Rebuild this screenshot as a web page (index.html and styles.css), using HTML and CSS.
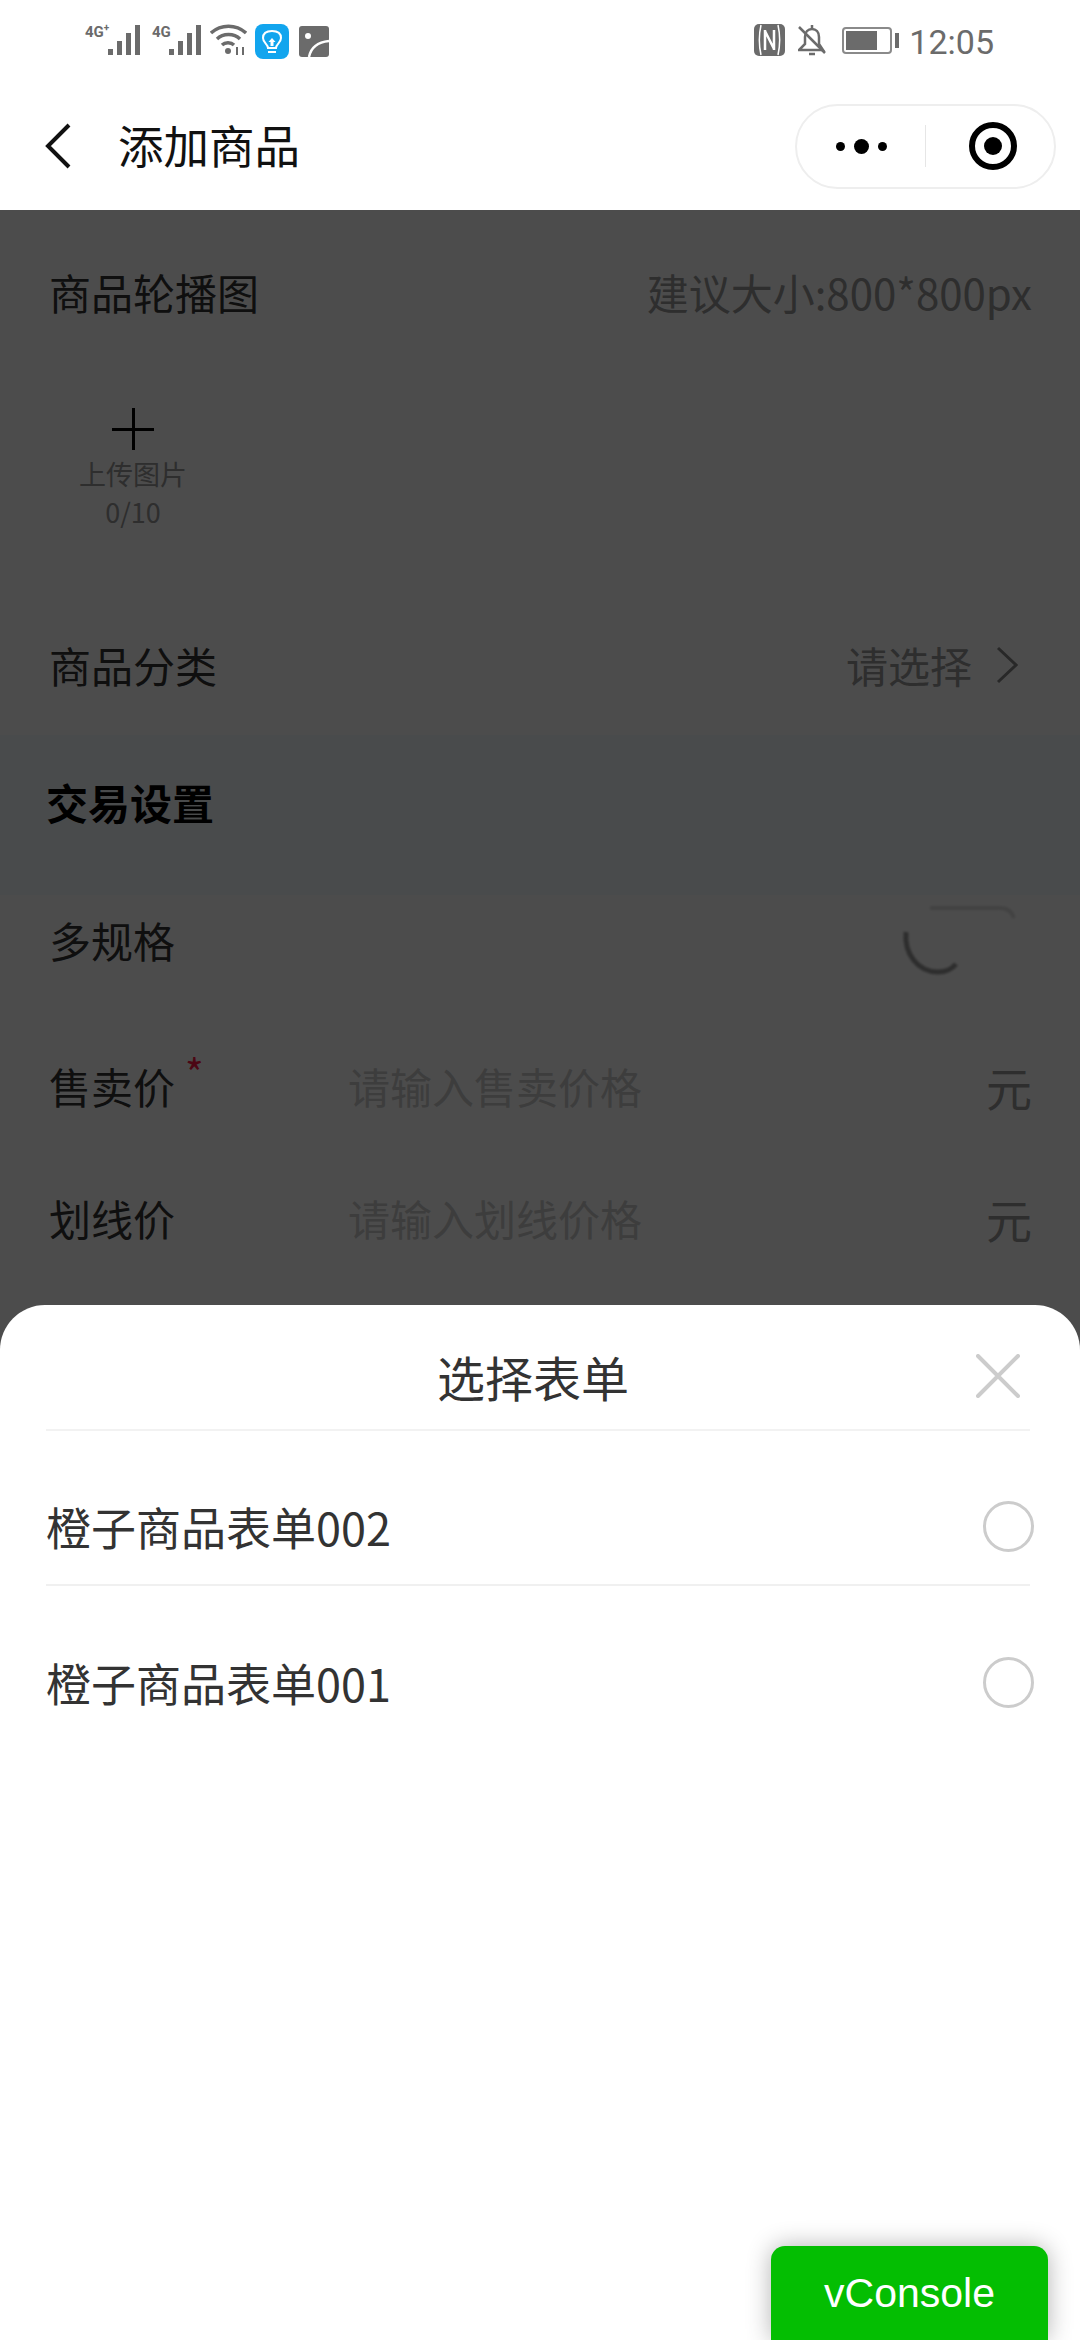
FILE: index.html
```html
<!DOCTYPE html>
<html lang="zh-CN">
<head>
    <meta charset="UTF-8">
    <meta name="viewport" content="width=device-width, initial-scale=1.0">
    <title>添加商品</title>
    <link rel="stylesheet" href="styles.css">
</head>
<body>
    <div class="phone">
        <div class="status-bar">
            <div class="status-left">
                <div class="signal">
                    <span class="net-label">4G<sup>+</sup></span>
                    <svg class="bars" width="32" height="32" viewBox="0 0 32 32"><rect x="0" y="25" width="5" height="6" fill="#6b6b6b"/><rect x="9" y="17" width="5" height="14" fill="#6b6b6b"/><rect x="18" y="9" width="5" height="22" fill="#6b6b6b"/><rect x="27" y="1" width="5" height="30" fill="#6b6b6b"/></svg>
                </div>
                <div class="signal signal-two">
                    <span class="net-label net-label-short">4G</span>
                    <svg class="bars" width="32" height="32" viewBox="0 0 32 32"><rect x="0" y="25" width="5" height="6" fill="#6b6b6b"/><rect x="9" y="17" width="5" height="14" fill="#6b6b6b"/><rect x="18" y="9" width="5" height="22" fill="#6b6b6b"/><rect x="27" y="1" width="5" height="30" fill="#6b6b6b"/></svg>
                </div>
                <svg class="wifi" width="37" height="32" viewBox="0 0 37 32" fill="none" stroke="#6b6b6b" stroke-width="3.4">
                    <path d="M1 9C11 0 26 0 36 9"/>
                    <path d="M7 15C13 9 24 9 30 15"/>
                    <path d="M12 21C15 18 21 18 24 21"/>
                    <circle cx="18" cy="27" r="3" fill="#6b6b6b" stroke="none"/>
                    <path d="M27 31V23M33 31V23" stroke-width="2"/>
                </svg>
                <svg class="app-icon" width="34" height="35" viewBox="0 0 34 35">
                    <rect width="34" height="35" rx="8" fill="#12a5ee"/>
                    <path d="M13 24C13 20 8 19 8 14C8 9 12 7 17 7C22 7 26 9 26 14C26 19 21 20 21 24Z" fill="none" stroke="#fff" stroke-width="2"/>
                    <path d="M17 14L13.500 18H15.500V22H18.500V18H20.500Z" fill="#fff"/>
                    <path d="M13 28H21" stroke="#fff" stroke-width="2"/>
                </svg>
                <svg class="pic-icon" width="30" height="31" viewBox="0 0 30 31">
                    <rect width="30" height="31" rx="3" fill="#6b6b6b"/>
                    <circle cx="9" cy="10" r="3" fill="#fff"/>
                    <path d="M10 31C12 21 20 16 30 15" fill="none" stroke="#fff" stroke-width="2.500"/>
                </svg>
            </div>
            <div class="status-right">
                <svg class="nfc" width="31" height="32" viewBox="0 0 31 32">
                    <rect width="31" height="32" rx="5" fill="#6b6b6b"/>
                    <path d="M7 1C5 10 5 22 7 31M24 1C26 10 26 22 24 31" fill="none" stroke="#fff" stroke-width="1.500"/>
                    <path d="M11 6V26M20 6V26M11 7L20 25" fill="none" stroke="#fff" stroke-width="2.500"/>
                </svg>
                <svg class="bell" width="28" height="32" viewBox="0 0 28 32" fill="none" stroke="#6b6b6b" stroke-width="2.500">
                    <path d="M1 26H25L21 20V13C21 8 18 5 14 5C10 5 7 8 7 13V20Z"/>
                    <path d="M14 1V5M11 30H17M1 3L27 29"/>
                </svg>
                <div class="battery">
                    <div class="battery-body"><div class="battery-fill"></div></div>
                    <div class="battery-nub"></div>
                </div>
                <span class="time">12:05</span>
            </div>
        </div>

        <div class="nav-bar">
            <svg class="back" width="26" height="46" viewBox="0 0 26 46" fill="none" stroke="#111" stroke-width="4">
                <path d="M24 2L3 23L24 44"/>
            </svg>
            <h1 class="nav-title">添加商品</h1>
            <div class="capsule">
                <div class="capsule-more">
                    <span class="dot"></span>
                    <span class="dot dot-big"></span>
                    <span class="dot"></span>
                </div>
                <div class="capsule-line"></div>
                <div class="capsule-target"><div class="target-inner"></div></div>
            </div>
        </div>

        <div class="form">
            <div class="row row-head">
                <span class="label">商品轮播图</span>
                <span class="hint">建议大小:800*800px</span>
            </div>
            <div class="upload">
                <div class="plus"></div>
                <div class="upload-text">上传图片</div>
                <div class="upload-text">0/10</div>
            </div>
            <div class="row row-category">
                <span class="label">商品分类</span>
                <span class="select">
                    <span class="hint">请选择</span>
                    <svg width="22" height="38" viewBox="0 0 22 38" fill="none" stroke="#888" stroke-width="3"><path d="M2 2L20 19L2 36"/></svg>
                </span>
            </div>
            <div class="section-title"><h3>交易设置</h3></div>
            <div class="row row-spec">
                <span class="label">多规格</span>
                <svg class="switch" width="120" height="76" viewBox="0 0 120 76" fill="none">
                    <path d="M6 30C4 52 18 70 38 70C46 70 52 67 56 62" stroke="#999" stroke-width="5"/>
                    <path d="M30 6H100C108 6 112 10 114 16" stroke="#ddd" stroke-width="4"/>
                </svg>
            </div>
            <div class="row row-input">
                <span class="label label-field">售卖价<sup class="star">*</sup></span>
                <span class="placeholder">请输入售卖价格</span>
                <span class="unit">元</span>
            </div>
            <div class="row row-input">
                <span class="label label-field">划线价</span>
                <span class="placeholder">请输入划线价格</span>
                <span class="unit">元</span>
            </div>
        </div>

        <div class="mask"></div>

        <div class="sheet">
            <div class="sheet-head">
                <span></span>
                <span class="sheet-title">选择表单</span>
                <svg class="close" width="44" height="44" viewBox="0 0 44 44" stroke="#ccc" stroke-width="4" stroke-linecap="round">
                    <path d="M2 2L42 42M42 2L2 42"/>
                </svg>
            </div>
            <div class="option">
                <span>橙子商品表单002</span>
                <span class="radio"></span>
            </div>
            <div class="option">
                <span>橙子商品表单001</span>
                <span class="radio"></span>
            </div>
        </div>

        <div class="vconsole">vConsole</div>
    </div>
</body>
</html>
```

FILE: styles.css
```css
* {
    box-sizing: border-box;
}

html, body {
    margin: 0;
    padding: 0;
}

body {
    font-family: "Noto Sans CJK SC", "Noto Sans", sans-serif;
    color: #333;
    background: #fff;
}

.phone {
    position: relative;
    width: 1080px;
    height: 2340px;
    overflow: hidden;
    background: #fff;
}

/* status bar */
.status-bar {
    height: 72px;
    padding: 24px 86px 0 85px;
    display: flex;
    justify-content: space-between;
    align-items: flex-start;
}

.status-left, .status-right {
    display: flex;
    align-items: flex-start;
}

.signal {
    display: flex;
    align-items: flex-start;
    height: 32px;
}

.signal-two {
    margin-left: 12px;
}

.net-label {
    font-family: "Roboto", sans-serif;
    font-size: 15px;
    line-height: 16px;
    font-weight: 700;
    color: #6b6b6b;
    width: 23px;
    white-space: nowrap;
}

.net-label-short {
    width: 17px;
}

.net-label sup {
    font-size: 10px;
    line-height: 0;
}

.wifi {
    margin-left: 9px;
}

.app-icon {
    margin-left: 8px;
}

.pic-icon {
    margin: 2px 0 0 10px;
}

.bell {
    margin-left: 13px;
}

.battery {
    display: flex;
    align-items: center;
    margin: 3px 0 0 16px;
}

.battery-body {
    width: 50px;
    height: 27px;
    border: 2px solid #8a8a8a;
    border-radius: 4px;
    padding: 2px;
}

.battery-fill {
    width: 31px;
    height: 100%;
    background: #6b6b6b;
}

.battery-nub {
    width: 4px;
    height: 15px;
    margin-left: 3px;
    background: #6b6b6b;
}

.time {
    font-family: "Roboto", sans-serif;
    font-size: 34px;
    line-height: 36px;
    color: #6b6b6b;
    margin-left: 10px;
}

/* nav */
.nav-bar {
    height: 138px;
    padding: 10px 24px 0 45px;
    display: flex;
    align-items: center;
}

.nav-title {
    margin: 0 0 4px 47px;
    font-size: 45.500px;
    font-weight: 400;
    line-height: 60px;
    color: #111;
}

.capsule {
    margin-left: auto;
    width: 261px;
    height: 85px;
    border: 2px solid #eee;
    border-radius: 43px;
    display: flex;
    align-items: center;
}

.capsule-more {
    width: 128px;
    display: flex;
    justify-content: center;
    align-items: center;
    gap: 9px;
}

.dot {
    width: 9px;
    height: 9px;
    border-radius: 50%;
    background: #000;
}

.dot-big {
    width: 15px;
    height: 15px;
}

.capsule-line {
    width: 1px;
    height: 42px;
    background: #e6e6e6;
}

.capsule-target {
    width: 48px;
    height: 48px;
    margin-left: 43px;
    border: 6px solid #000;
    border-radius: 50%;
    display: flex;
    justify-content: center;
    align-items: center;
}

.target-inner {
    width: 18px;
    height: 18px;
    border-radius: 50%;
    background: #000;
}

/* form under the mask */
.form {
    background: #fff;
}

.row {
    display: flex;
    align-items: center;
    justify-content: space-between;
    padding: 0 48px 0 49px;
}

.row-head {
    height: 170px;
    padding-bottom: 6px;
}

.row-category {
    height: 140px;
    padding-right: 62px;
}

.row-spec {
    height: 127px;
    padding-bottom: 37px;
    padding-right: 60px;
}

.row-input {
    height: 132px;
    padding-bottom: 5px;
}

.label {
    font-size: 42px;
    line-height: 56px;
    color: #333;
}

.label-field {
    width: 299px;
    flex-shrink: 0;
}

.star {
    color: #ff1744;
    font-size: 40px;
    line-height: 0;
    margin-left: 10px;
}

.hint {
    font-size: 42px;
    line-height: 56px;
    color: #999;
}

.select {
    display: flex;
    align-items: center;
    gap: 24px;
}

.switch {
    filter: blur(1px);
}

.upload {
    width: 170px;
    height: 215px;
    margin-left: 48px;
    padding-top: 28px;
    text-align: center;
}

.plus {
    width: 42px;
    height: 42px;
    margin: 0 auto 5px;
    background:
        linear-gradient(#000, #000) center / 100% 3px no-repeat,
        linear-gradient(#000, #000) center / 3px 100% no-repeat;
}

.upload-text {
    font-size: 27px;
    line-height: 38px;
    color: #999;
}

.section-title {
    height: 160px;
    padding: 0 0 26px 46px;
    display: flex;
    align-items: center;
    background: #f6faff;
}

.section-title h3 {
    margin: 0;
    font-size: 42px;
    font-weight: 700;
    line-height: 56px;
    color: #000;
}

.placeholder {
    flex: 1;
    font-size: 42px;
    line-height: 56px;
    color: #ccc;
}

.unit {
    font-size: 46px;
    line-height: 56px;
    color: #999;
}

/* overlay */
.mask {
    position: absolute;
    left: 0;
    right: 0;
    top: 210px;
    bottom: 0;
    background: rgba(0, 0, 0, 0.7);
}

.sheet {
    position: absolute;
    left: 0;
    right: 0;
    top: 1305px;
    bottom: 0;
    background: #fff;
    border-radius: 45px 45px 0 0;
}

.sheet-head {
    height: 126px;
    margin: 0 50px 0 46px;
    padding: 18px 10px 0 0;
    display: grid;
    grid-template-columns: 1fr auto 1fr;
    align-items: center;
    border-bottom: 2px solid #f2f2f2;
}

.sheet-title {
    font-size: 48px;
    line-height: 62px;
    color: #333;
}

.close {
    justify-self: end;
}

.option {
    height: 155px;
    margin: 0 50px 0 46px;
    padding-top: 38px;
    display: flex;
    align-items: center;
    justify-content: space-between;
    font-size: 45px;
    color: #333;
    border-bottom: 2px solid #f0f0f0;
}

.option:last-child {
    border-bottom: none;
}

.radio {
    width: 51px;
    height: 51px;
    margin-right: -4px;
    border: 3px solid #ccc;
    border-radius: 50%;
}

.vconsole {
    position: absolute;
    left: 771px;
    top: 2246px;
    width: 277px;
    height: 94px;
    border-radius: 14px 14px 0 0;
    background: #04be02;
    box-shadow: 0 0 24px rgba(0, 0, 0, 0.3);
    color: #fff;
    font-family: "Liberation Sans", Arial, sans-serif;
    font-size: 41px;
    display: flex;
    align-items: center;
    justify-content: center;
}
```
